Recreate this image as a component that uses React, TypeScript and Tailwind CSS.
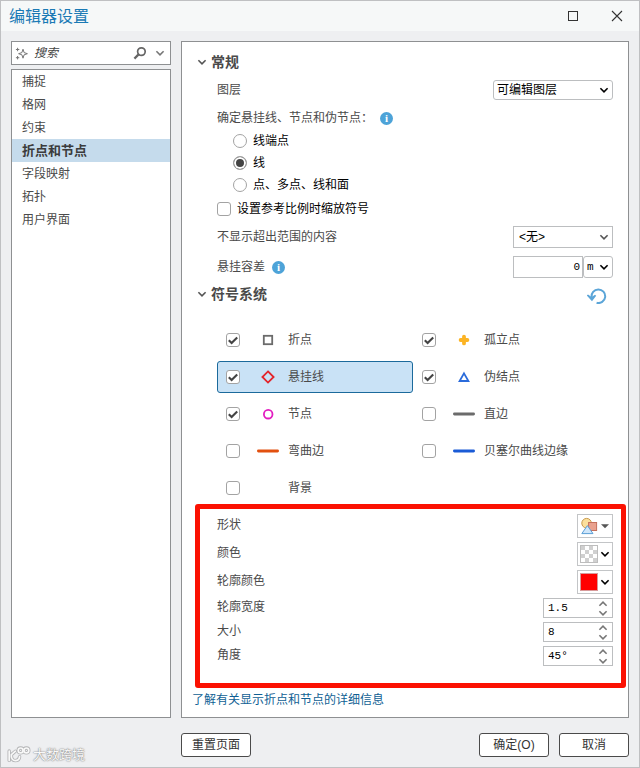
import { useState, type ReactNode } from "react";
import { clsx } from "clsx";

const PAGES = ["捕捉", "格网", "约束", "折点和节点", "字段映射", "拓扑", "用户界面"];

const TOPOLOGY_SCOPES = ["线端点", "线", "点、多点、线和面"];

type SymbolItem = {
  id: string;
  label: string;
  checked: boolean;
  icon?: ReactNode;
};

const Line = ({ className }: { className: string }) => (
  <svg viewBox="0 0 24 24" className={clsx("size-6", className)}>
    <path d="M2.4 12H21.6" stroke="currentColor" strokeWidth="2.8" strokeLinecap="round" />
  </svg>
);

const SYMBOLS: SymbolItem[] = [
  {
    id: "vertex",
    label: "折点",
    checked: true,
    icon: (
      <svg viewBox="0 0 24 24" className="size-6" fill="none">
        <rect x="7.8" y="7.8" width="8.4" height="8.4" stroke="#6b6b6b" strokeWidth="1.8" />
      </svg>
    ),
  },
  {
    id: "isolated",
    label: "孤立点",
    checked: true,
    icon: (
      <svg viewBox="0 0 24 24" className="size-6">
        <path d="M12 8.6V15.4M8.6 12H15.4" stroke="#fcb424" strokeWidth="3.8" strokeLinecap="round" />
      </svg>
    ),
  },
  {
    id: "dangle",
    label: "悬挂线",
    checked: true,
    icon: (
      <svg viewBox="0 0 24 24" className="size-6" fill="none">
        <path d="M12 6.4L17.6 12L12 17.6L6.4 12Z" stroke="#e3242b" strokeWidth="1.8" />
      </svg>
    ),
  },
  {
    id: "pseudo",
    label: "伪结点",
    checked: true,
    icon: (
      <svg viewBox="0 0 24 24" className="size-6" fill="none">
        <path d="M12 8.4L16.4 16H7.6Z" stroke="#2a6bdb" strokeWidth="1.8" />
      </svg>
    ),
  },
  {
    id: "node",
    label: "节点",
    checked: true,
    icon: (
      <svg viewBox="0 0 24 24" className="size-6" fill="none">
        <circle cx="12.2" cy="12.2" r="4.3" stroke="#e21cc0" strokeWidth="1.8" />
      </svg>
    ),
  },
  { id: "straight", label: "直边", checked: false, icon: <Line className="text-[#6b6b6b]" /> },
  { id: "curved", label: "弯曲边", checked: false, icon: <Line className="text-[#e2500f]" /> },
  { id: "bezier", label: "贝塞尔曲线边缘", checked: false, icon: <Line className="text-[#1a5bd6]" /> },
  { id: "background", label: "背景", checked: false },
];

const Chevron = ({ className }: { className?: string }) => (
  <svg viewBox="0 0 10 10" fill="none" className={clsx("pointer-events-none size-[10px]", className)}>
    <path d="M1.4 3.2L5 6.8L8.6 3.2" stroke="currentColor" strokeWidth="1.6" />
  </svg>
);

const CheckBox = ({ id, defaultChecked }: { id: string; defaultChecked?: boolean }) => (
  <span className="grid size-[14px] shrink-0">
    <input
      id={id}
      type="checkbox"
      defaultChecked={defaultChecked}
      className="peer size-[14px] appearance-none rounded-[3px] border border-[#a3a3a3] bg-white [grid-area:1/1]"
    />
    <svg
      viewBox="0 0 14 14"
      fill="none"
      className="pointer-events-none invisible size-[14px] [grid-area:1/1] peer-checked:visible"
    >
      <path d="M2.8 7.2L5.6 10L11.2 4.4" stroke="#444444" strokeWidth="2.1" />
    </svg>
  </span>
);

type SelectProps = {
  id: string;
  label?: string;
  options: string[];
  className?: string;
  selectClassName?: string;
  chevronClassName?: string;
};

const Select = ({ id, label, options, className, selectClassName, chevronClassName }: SelectProps) => (
  <span className={clsx("grid items-center", className)}>
    <select
      id={id}
      aria-label={label}
      className={clsx(
        "size-full appearance-none border border-[#bcbec0] bg-white text-black [grid-area:1/1]",
        selectClassName
      )}
    >
      {options.map((o) => (
        <option key={o}>{o}</option>
      ))}
    </select>
    <Chevron className={clsx("mr-1 justify-self-end [grid-area:1/1]", chevronClassName ?? "text-black")} />
  </span>
);

const Info = () => (
  <span className="flex size-[13px] items-center justify-center rounded-full bg-[#4da3d8] font-['Liberation_Serif',serif] text-[11px] leading-[13px] font-bold text-white">
    i
  </span>
);

const SectionTitle = ({ children }: { children: ReactNode }) => (
  <h2 className="flex items-center gap-1 pl-[15px] text-sm font-bold">
    <Chevron className="text-[#555555]" />
    {children}
  </h2>
);

const PropertyRow = ({ id, label, children }: { id: string; label: string; children: ReactNode }) => (
  <div className="flex items-center justify-between">
    <label htmlFor={id} className="pb-[2px] leading-4">
      {label}
    </label>
    {children}
  </div>
);

const PickerButton = ({ id, children }: { id: string; children: ReactNode }) => (
  <button
    id={id}
    type="button"
    className="flex h-6 w-9 items-center justify-between border border-[#c3c5c7] bg-white px-[2px] text-black"
  >
    {children}
  </button>
);

const Spinner = ({ id, value }: { id: string; value: string }) => (
  <span className="flex h-5 w-[70px] border border-[#bcbec0] bg-white">
    <input
      id={id}
      type="text"
      defaultValue={value}
      className="w-full min-w-0 pl-1 font-['Liberation_Mono',monospace] text-[11px] text-black outline-none"
    />
    <span className="flex w-[18px] shrink-0 flex-col items-center justify-between text-[#777777]">
      <button type="button" aria-label="增加" className="flex h-[9px] items-center">
        <Chevron className="rotate-180" />
      </button>
      <button type="button" aria-label="减少" className="flex h-[9px] items-center">
        <Chevron />
      </button>
    </span>
  </span>
);

const DialogButton = ({ children }: { children: ReactNode }) => (
  <button
    type="button"
    className="h-6 w-[70px] rounded-[3px] border border-[#4a4a4a] bg-white text-[#333333]"
  >
    {children}
  </button>
);

export default function App() {
  const [page, setPage] = useState("折点和节点");
  const [symbol, setSymbol] = useState("dangle");

  return (
    <div className="flex min-h-screen flex-col border border-[#bfc0c2] bg-[#eeeff1] font-['Liberation_Sans','Noto_Sans_CJK_SC',sans-serif] text-xs text-[#4a4a4a]">
      {/* Title bar */}
      <header className="flex h-[30px] items-center justify-between bg-[#f6f8f8] pr-4 pl-2">
        <h1 className="pt-[2px] text-base text-[#1a7ab5]">编辑器设置</h1>
        <div className="flex gap-8">
          <button type="button" aria-label="最大化">
            <svg viewBox="0 0 12 12" fill="none" className="size-3">
              <rect x="1.5" y="1.5" width="9" height="9" stroke="#333333" />
            </svg>
          </button>
          <button type="button" aria-label="关闭">
            <svg viewBox="0 0 12 12" fill="none" className="size-3">
              <path d="M1 1L11 11M11 1L1 11" stroke="#333333" strokeWidth="1.1" />
            </svg>
          </button>
        </div>
      </header>

      <div className="flex flex-1 gap-[10px] px-[10px] pt-[10px]">
        {/* Page list */}
        <aside className="flex w-40 shrink-0 flex-col gap-1">
          <div className="flex h-6 items-center border border-[#8e9092] bg-white pr-[5px] pl-[3px]">
            <svg viewBox="0 0 13 13" fill="none" className="size-[13px] shrink-0" stroke="#777777">
              <path d="M8 2.2L9.1 5.6L12.4 6.7L9.1 7.8L8 11.2L6.9 7.8L3.6 6.7L6.9 5.6Z" />
              <path d="M2.6 .8V4.2M.9 2.5H4.3M2.6 9V12.4M.9 10.7H4.3" />
            </svg>
            <input
              type="search"
              aria-label="搜索"
              placeholder="搜索"
              className="w-full min-w-0 pl-[6px] italic outline-none placeholder:text-[#444444]"
            />
            <svg viewBox="0 0 14 14" fill="none" className="size-[14px] shrink-0" stroke="#666666">
              <circle cx="8.4" cy="5.6" r="3.8" strokeWidth="1.7" />
              <path d="M5.6 8.4L1.4 12.6" strokeWidth="2.2" />
            </svg>
            <Chevron className="ml-2 shrink-0 text-[#777777]" />
          </div>
          <nav className="flex flex-1 flex-col border border-[#8e9092] bg-white">
            {PAGES.map((p) => (
              <button
                key={p}
                type="button"
                onClick={() => setPage(p)}
                className={clsx(
                  "h-[23px] pl-[10px] text-left",
                  p === page && "bg-[#c5dbec] text-[13px] font-bold text-[#3c3c3c]"
                )}
              >
                {p}
              </button>
            ))}
          </nav>
        </aside>

        <main className="flex min-w-0 flex-1 flex-col border border-[#8e9092] bg-white pt-[10px] pb-[7px]">
          {/* General */}
          <SectionTitle>常规</SectionTitle>

          <div className="flex flex-col pr-[15px] pl-[35px]">
            <div className="mt-2 flex h-5 items-center justify-between">
              <label htmlFor="layer">图层</label>
              <Select
                id="layer"
                options={["可编辑图层"]}
                className="h-5 w-[120px]"
                selectClassName="rounded-[3px] pl-[3px]"
              />
            </div>

            <fieldset>
              <legend className="flex h-7 items-center gap-[7px] pt-2">
                确定悬挂线、节点和伪节点：
                <Info />
              </legend>
              <div className="flex flex-col pt-[2px] pl-4 text-black">
                {TOPOLOGY_SCOPES.map((scope) => (
                  <label key={scope} className="flex h-[22px] items-center gap-[6px]">
                    <input
                      type="radio"
                      name="scope"
                      defaultChecked={scope === "线"}
                      className="size-[14px] appearance-none rounded-full border border-[#a3a3a3] bg-white checked:bg-[#444444] checked:shadow-[inset_0_0_0_2px_white]"
                    />
                    {scope}
                  </label>
                ))}
              </div>
            </fieldset>

            <div className="mt-[2px] flex h-[22px] items-center gap-[6px] text-black">
              <CheckBox id="scale-symbols" />
              <label htmlFor="scale-symbols">设置参考比例时缩放符号</label>
            </div>

            <div className="mt-[6px] flex h-[22px] items-center justify-between">
              <label htmlFor="extent">不显示超出范围的内容</label>
              <Select
                id="extent"
                options={["<无>"]}
                className="h-[22px] w-[100px]"
                selectClassName="pl-[5px]"
                chevronClassName="text-[#555555]"
              />
            </div>

            <div className="mt-2 flex h-[22px] items-center justify-between">
              <div className="flex items-center gap-[7px]">
                <label htmlFor="tolerance">悬挂容差</label>
                <Info />
              </div>
              <div className="flex h-[22px] w-[100px]">
                <input
                  id="tolerance"
                  type="text"
                  defaultValue="0"
                  className="w-[70px] border border-[#bcbec0] pr-[2px] text-right font-['Liberation_Mono',monospace] text-[11px] text-black"
                />
                <Select
                  id="unit"
                  label="单位"
                  options={["m"]}
                  className="h-[22px] w-[30px]"
                  selectClassName="rounded-[3px] pl-[3px] font-['Liberation_Mono',monospace] text-[11px]"
                />
              </div>
            </div>
          </div>

          {/* Symbology */}
          <div className="mt-[6px] flex h-5 items-center justify-between pr-[21px]">
            <SectionTitle>符号系统</SectionTitle>
            <button type="button" aria-label="重置符号系统" className="text-[#5ba5d8]">
              <svg viewBox="0 0 20 20" fill="none" className="size-5">
                <path d="M4.7 13.4A6.8 6.8 0 1 1 9.6 18.8" stroke="currentColor" strokeWidth="2" />
                <path d="M-.4 11.4L1 10.6L4.6 13L8 10.8L9.2 11.8L5 17.2Z" fill="currentColor" />
              </svg>
            </button>
          </div>

          <ul className="mt-5 grid grid-cols-2 gap-y-[5px] pr-[19px] pl-[35px]">
            {SYMBOLS.map((s) => (
              <li
                key={s.id}
                onClick={() => setSymbol(s.id)}
                className={clsx(
                  "flex h-8 items-center rounded-[3px] border pl-2",
                  s.id === symbol ? "border-[#1b6a9c] bg-[#c9e2f6]" : "border-transparent"
                )}
              >
                <CheckBox id={s.id} defaultChecked={s.checked} />
                <span className="mr-2 ml-4 size-6">{s.icon}</span>
                <label htmlFor={s.id}>{s.label}</label>
              </li>
            ))}
          </ul>

          {/* Properties of the selected symbol */}
          <section className="mr-[2px] ml-[13px] flex flex-col gap-1 rounded-[3px] border-5 border-[#fb1102] pt-[5px] pr-2 pb-[17px] pl-[17px]">
            <PropertyRow id="shape" label="形状">
              <PickerButton id="shape">
                <svg viewBox="0 0 18 18" className="size-[18px]">
                  <circle cx="6.6" cy="6.2" r="4.8" fill="#fbdf9c" stroke="#c99a4b" />
                  <rect x="8.6" y="5.5" width="8" height="8" fill="#e9a18d" stroke="#c4705c" />
                  <path d="M7.4 8.6L13 16.6H1.8Z" fill="#cfe6fa" stroke="#5b9fd6" />
                </svg>
                <svg viewBox="0 0 10 10" className="size-[10px]">
                  <path d="M1 3.2H9L5 7.2Z" fill="#555555" />
                </svg>
              </PickerButton>
            </PropertyRow>
            <PropertyRow id="fill" label="颜色">
              <PickerButton id="fill">
                <span className="size-[18px] border border-[#bdbdbd] bg-[repeating-conic-gradient(#ffffff_0_25%,#d0d0d0_0_50%)] bg-size-[8px_8px]" />
                <Chevron />
              </PickerButton>
            </PropertyRow>
            <PropertyRow id="outline-color" label="轮廓颜色">
              <PickerButton id="outline-color">
                <span className="size-[18px] border border-[#d79a9a] bg-[#ff0000]" />
                <Chevron />
              </PickerButton>
            </PropertyRow>
            <PropertyRow id="outline-width" label="轮廓宽度">
              <Spinner id="outline-width" value="1.5" />
            </PropertyRow>
            <PropertyRow id="size" label="大小">
              <Spinner id="size" value="8" />
            </PropertyRow>
            <PropertyRow id="angle" label="角度">
              <Spinner id="angle" value="45°" />
            </PropertyRow>
          </section>

          <a href="#help" className="mt-[2px] ml-[10px] self-start leading-5 text-[#0f5f94]">
            了解有关显示折点和节点的详细信息
          </a>
        </main>
      </div>

      <footer className="flex h-[49px] items-center gap-[10px] pt-[5px] pr-[10px]">
        <div className="flex w-40 items-center gap-[2px] self-end pb-[3px] pl-[6px] text-[13px] leading-[18px] text-[#f8f8f8] [text-shadow:0_0_2px_#808080,0_0_1px_#808080]">
          <svg viewBox="0 0 24 18" fill="none" className="h-[18px] w-6" strokeLinecap="round">
            <g stroke="#b3b4b6" strokeWidth="3.4">
              <path d="M2.2 5V14.4M8.4 5.2L4.4 8.6C4 12 5.4 14.6 8.2 14.6C10.6 14.6 12.4 13 12.6 10.6" />
              <circle cx="13.6" cy="4.4" r="2.4" />
              <circle cx="19.4" cy="4.4" r="2.4" />
            </g>
            <g stroke="#f8f8f8" strokeWidth="1.7">
              <path d="M2.2 5V14.4M8.4 5.2L4.4 8.6C4 12 5.4 14.6 8.2 14.6C10.6 14.6 12.4 13 12.6 10.6" />
              <circle cx="13.6" cy="4.4" r="2.4" />
              <circle cx="19.4" cy="4.4" r="2.4" />
            </g>
          </svg>
          大数跨境
        </div>
        <div className="ml-[10px] flex flex-1 items-center gap-[10px]">
          <DialogButton>重置页面</DialogButton>
          <span className="flex-1" />
          <DialogButton>确定(O)</DialogButton>
          <DialogButton>取消</DialogButton>
        </div>
      </footer>
    </div>
  );
}
